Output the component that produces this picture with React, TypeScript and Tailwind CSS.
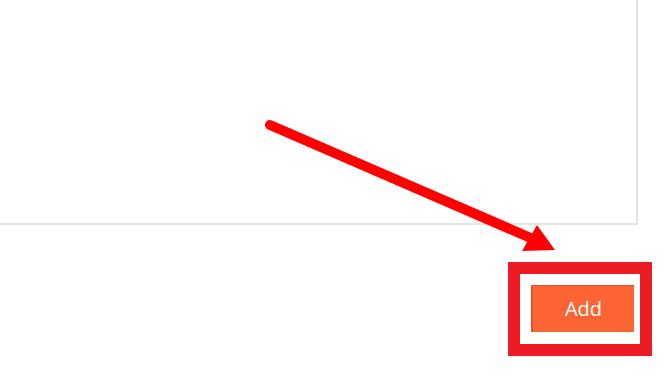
import React from "react";

export default function App() {
  return (
    <div className="relative w-[664px] h-[375px] bg-white overflow-hidden">
      <div className="w-[638px] h-[225px] border-r-2 border-b-2 border-[#e4e4e4] bg-white" />
      <div className="flex justify-end pr-[12px] pt-[37px]">
        <div className="border-[12px] border-[#ed1c24] bg-white pl-[11px] pr-[6px] pt-[11px] pb-[12px]">
          <button
            className="w-[103px] h-[47px] bg-[#fc6533] border-l-2 border-t border-[#e9512b] text-white text-[20px] leading-none flex items-center justify-center"
            style={{ fontFamily: '"Open Sans", "Liberation Sans", sans-serif' }}
          >
            Add
          </button>
        </div>
      </div>
      <svg
        className="absolute left-0 top-0 pointer-events-none"
        width="664"
        height="375"
        viewBox="0 0 664 375"
      >
        <line x1="270" y1="125" x2="533" y2="239" stroke="#ff0000" strokeWidth="10" strokeLinecap="round" />
        <polygon points="537,225 522,251 555,250" fill="#ff0000" />
      </svg>
    </div>
  );
}
